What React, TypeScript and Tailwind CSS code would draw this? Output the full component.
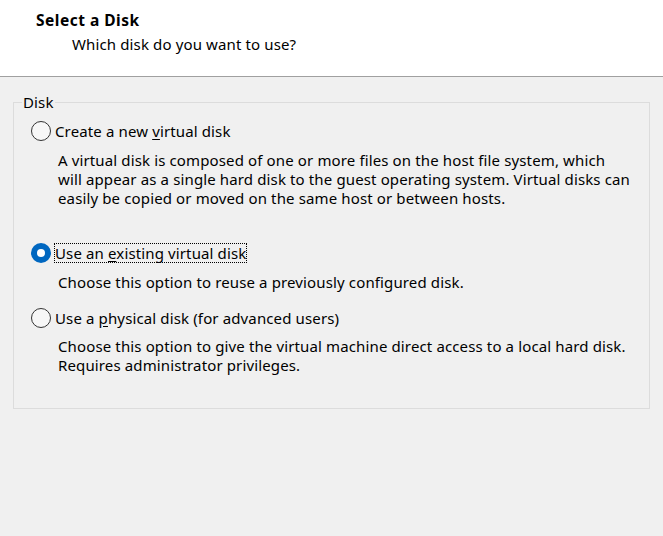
import React from "react";

function Radio({ checked }: { checked?: boolean }) {
  if (checked) {
    return (
      <span className="flex h-[20px] w-[20px] shrink-0 items-center justify-center rounded-full bg-[#0067c0]">
        <span className="h-[8px] w-[8px] rounded-full bg-white" />
      </span>
    );
  }
  return <span className="h-[20px] w-[20px] shrink-0 rounded-full border border-[#333333] bg-[#f7f7f7]" />;
}

export default function App() {
  return (
    <div className="h-[536px] w-[663px] overflow-hidden bg-[#f0f0f0] text-[15px] leading-[19px] tracking-[0.13px] text-black" style={{ fontFamily: '"Noto Sans", sans-serif' }}>
      <div className="h-[77px] border-b border-[#a0a0a0] bg-white pt-[11px]">
        <div className="pl-[36px] text-[15.5px] font-bold tracking-[0.5px]">Select a Disk</div>
        <div className="mt-[5px] pl-[72px]">Which disk do you want to use?</div>
      </div>
      <fieldset className="mt-[16px] ml-[13px] h-[316px] w-[637px] border border-[#dcdcdc] pl-[17px]">
        <legend className="ml-[-9px] px-[1px]">Disk</legend>
        <div className="mt-[9px] flex h-[20px] items-center gap-[4px]">
          <Radio />
          <span>Create a new <u className="underline-offset-2">v</u>irtual disk</span>
        </div>
        <div className="mt-[10px] pl-[27px]">
          A virtual disk is composed of one or more files on the host file system, which
          <br />
          will appear as a single hard disk to the guest operating system. Virtual disks can
          <br />
          easily be copied or moved on the same host or between hosts.
        </div>
        <div className="mt-[35px] flex h-[20px] items-center gap-[3px]">
          <Radio checked />
          <span className="border border-dotted border-black leading-[18px]">Use an <u className="underline-offset-2">e</u>xisting virtual disk</span>
        </div>
        <div className="mt-[10px] pl-[27px]">Choose this option to reuse a previously configured disk.</div>
        <div className="mt-[16px] flex h-[20px] items-center gap-[4px]">
          <Radio />
          <span>Use a <u className="underline-offset-2">p</u>hysical disk (for advanced users)</span>
        </div>
        <div className="mt-[9px] pl-[27px]">
          Choose this option to give the virtual machine direct access to a local hard disk.
          <br />
          Requires administrator privileges.
        </div>
      </fieldset>
    </div>
  );
}
